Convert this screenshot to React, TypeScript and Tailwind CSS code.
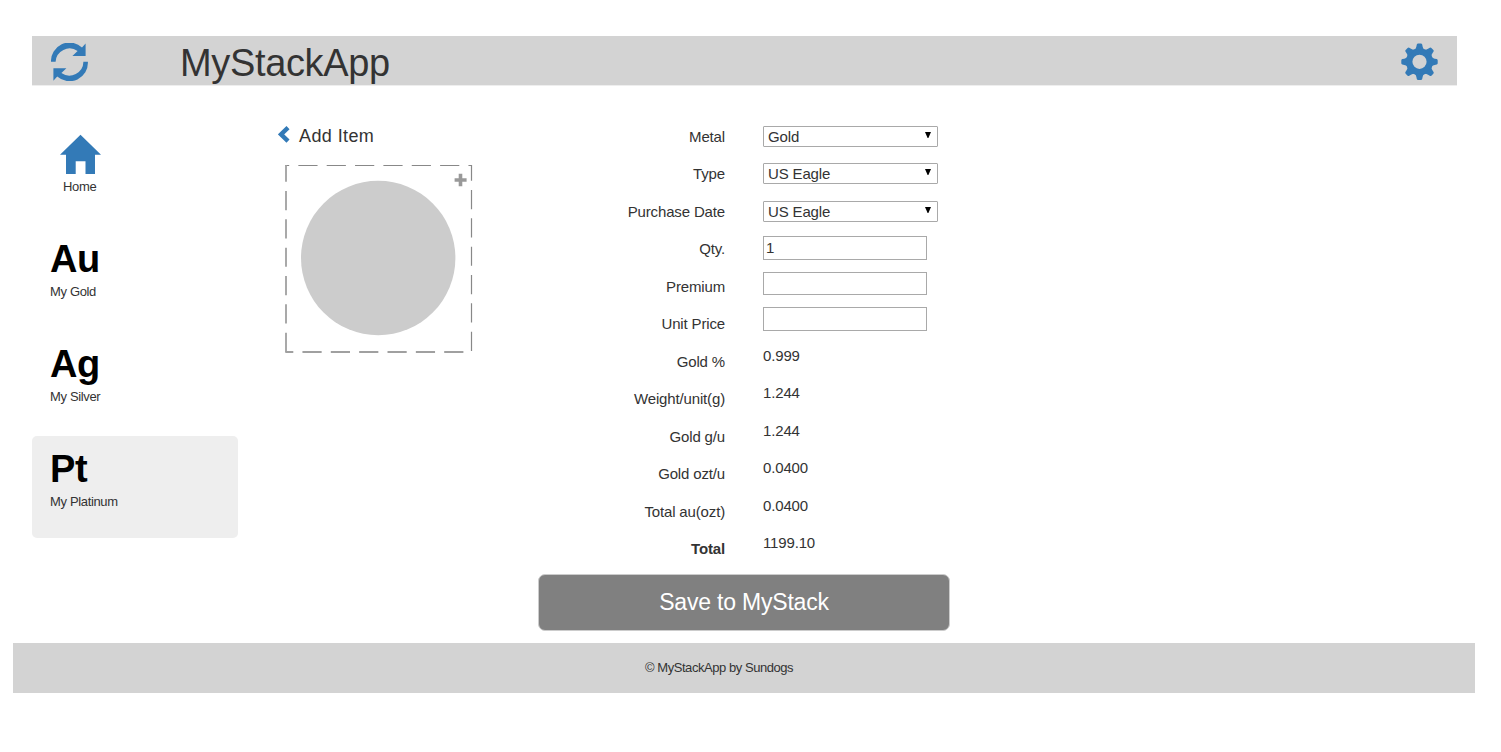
import React from "react";

const selects = [
  { label: "Metal", value: "Gold", gap: "mb-4" },
  { label: "Type", value: "US Eagle", gap: "mb-[17px]" },
  { label: "Purchase Date", value: "US Eagle", gap: "mb-3.5" },
];

const inputs = [
  { label: "Qty.", value: "1", size: "h-6 mb-3" },
  { label: "Premium", value: "", size: "h-[23px] mb-3" },
  { label: "Unit Price", value: "", size: "h-6 mb-1.5" },
];

const readings = [
  { label: "Gold %", value: "0.999" },
  { label: "Weight/unit(g)", value: "1.244" },
  { label: "Gold g/u", value: "1.244" },
  { label: "Gold ozt/u", value: "0.0400" },
  { label: "Total au(ozt)", value: "0.0400" },
  { label: "Total", value: "1199.10" },
];

const metals = [
  { symbol: "Au", name: "My Gold", active: false },
  { symbol: "Ag", name: "My Silver", active: false },
  { symbol: "Pt", name: "My Platinum", active: true },
];

function RefreshIcon() {
  return (
    <svg className="h-[38px] w-[38px]" viewBox="0 0 38 38">
      <path
        fill="#337ab7"
        d="M0 18.8A18.5 18.5 0 0 1 31 4.4L34.6 .4V13H21.4L26.6 8A14 14 0 0 0 4.6 18.8ZM36.9 18.8A18.5 18.5 0 0 1 6.2 33.6L2.4 37.8V25.3H15.4L10.4 30A14 14 0 0 0 32.4 18.8Z"
      />
    </svg>
  );
}

function CogIcon() {
  const teeth = [0, 45, 90, 135, 180, 225, 270, 315];
  return (
    <svg className="h-[37px] w-[37px]" viewBox="-18.5 -18.8 37 37">
      <circle r="10.3" fill="none" stroke="#337ab7" strokeWidth="6.4" />
      {teeth.map((angle) => (
        <path
          key={angle}
          transform={`rotate(${angle})`}
          fill="#337ab7"
          d="M-4.8 -12Q-3.4 -13.4 -3.1 -15.2L-2.7 -17.2Q-2.4 -18.2 -1.4 -18.2H1.4Q2.4 -18.2 2.7 -17.2L3.1 -15.2Q3.4 -13.4 4.8 -12Z"
        />
      ))}
    </svg>
  );
}

function HomeIcon() {
  return (
    <svg className="ml-[10px] h-10 w-[41px]" viewBox="0 0 41 40">
      <path fill="#337ab7" d="M20.5 .8L41 20.8H35V40H25.5V27.2H15.7V40H6V20.8H0Z" />
    </svg>
  );
}

function ItemPicture() {
  return (
    <svg className="mt-[17px] ml-[15px] h-[188px] w-[188px]" viewBox="0 0 188 188">
      <circle cx="93.2" cy="93" r="77.2" fill="#ccc" />
      <g fill="none" stroke="#888">
        <path d="M.3 .5H187" strokeDasharray="19.2 9.15" strokeDashoffset="15.3" />
        <path d="M186.5 0V187.5" strokeWidth="1.2" strokeDasharray="19.2 9.15" strokeDashoffset="3.4" />
        <path d="M1 0V187.5" stroke="#a0a0a0" strokeWidth="1.8" strokeDasharray="19.2 9.15" strokeDashoffset="2.4" />
        <path d="M.3 187H187" stroke="#a0a0a0" strokeWidth="1.8" strokeDasharray="19.2 9.15" strokeDashoffset="11.2" />
      </g>
      <path fill="#999" d="M173.7 8.8H177.3V13.2H181.6V16.8H177.3V21.2H173.7V16.8H169.6V13.2H173.7Z" />
    </svg>
  );
}

export default function App() {
  return (
    <div className="h-[752px] w-full overflow-hidden bg-white pt-9 font-['Liberation_Sans',Arial,sans-serif] text-[15px] text-[#333]">
      <header className="mr-11 ml-8 flex h-[50px] items-start border-b border-[#eee] bg-[#d3d3d3] px-[19px]">
        <div className="mt-[7px] w-[126px]">
          <RefreshIcon />
        </div>
        <h1 className="mt-[5px] pl-[3px] text-[38px] leading-[44px] tracking-[-0.35px]">MyStackApp</h1>
        <div className="mt-[7px] ml-auto">
          <CogIcon />
        </div>
      </header>

      <main className="flex h-[557px] pl-8">
        <nav className="w-[206px] pt-[35px] text-[13px] leading-[18px] tracking-[-0.35px]">
          <a className="block h-[105px] rounded-[5px] pt-[13px] pl-[18px]">
            <HomeIcon />
            <div className="pt-1 pl-[13px]">Home</div>
          </a>
          {metals.map((metal) => (
            <a
              key={metal.symbol}
              className={
                metal.active
                  ? "block h-[102px] rounded-[5px] bg-[#eee] pt-[11px] pl-[18px]"
                  : "mb-[3px] block h-[102px] rounded-[5px] pt-[11px] pl-[18px]"
              }
            >
              <div className="text-[38px] leading-[44px] font-bold text-black">{metal.symbol}</div>
              <div className="pt-0.5">{metal.name}</div>
            </a>
          ))}
        </nav>

        <section className="ml-8 w-[268px] pt-[38px]">
          <h2 className="flex h-6 items-center text-[18px] leading-6 tracking-[0.4px]">
            <svg className="mr-[9.5px] mb-[3px] ml-[7.5px] h-[17px] w-3" viewBox="0 0 12 17">
              <path d="M10 1.6L3 8.4L10 15.2" fill="none" stroke="#337ab7" strokeWidth="4.4" />
            </svg>
            Add Item
          </h2>
          <ItemPicture />
        </section>

        <form className="w-[412px] pt-8">
          <div className="flex h-[456px]">
            <div className="-mt-px w-[187px] pt-[0.5px] text-right tracking-[-0.15px]">
              {[...selects, ...inputs, ...readings].map((row) => (
                <div
                  key={row.label}
                  className={row.label === "Total" ? "h-[37.5px] leading-[37.5px] font-bold" : "h-[37.5px] leading-[37.5px]"}
                >
                  {row.label}
                </div>
              ))}
            </div>
            <div className="ml-[38px] pt-2 tracking-[-0.15px]">
              {selects.map((row) => (
                <div
                  key={row.label}
                  className={`flex h-[21px] w-[175px] items-center justify-between rounded-[1px] border border-[#a9a9a9] pr-[6px] pl-[4px] leading-[19px] ${row.gap}`}
                >
                  {row.value}
                  <svg className="mb-[3px] h-1.5 w-1.5" viewBox="0 0 6 6">
                    <path d="M0 0H6L3.4 6H2.6Z" fill="#000" />
                  </svg>
                </div>
              ))}
              {inputs.map((row) => (
                <input
                  key={row.label}
                  defaultValue={row.value}
                  aria-label={row.label}
                  className={`block w-[164px] border border-[#a9a9a9] px-0.5 pb-0.5 leading-5 text-[#333] ${row.size}`}
                />
              ))}
              <div className="-mt-[0.5px]">
                {readings.map((row) => (
                  <div key={row.label} className="h-[37.5px] leading-[37.5px]">
                    {row.value}
                  </div>
                ))}
              </div>
            </div>
          </div>
          <button
            type="button"
            className="h-[57px] w-[412px] rounded-[7px] border border-[#ccc] bg-[#808080] text-[23px] tracking-[-0.2px] text-white"
          >
            Save to MyStack
          </button>
        </form>
      </main>

      <footer className="mr-[26px] ml-[13px] flex h-[50px] items-center bg-[#d3d3d3] pl-[632px] text-[13px] tracking-[-0.45px]">
        © MyStackApp by Sundogs
      </footer>
    </div>
  );
}
